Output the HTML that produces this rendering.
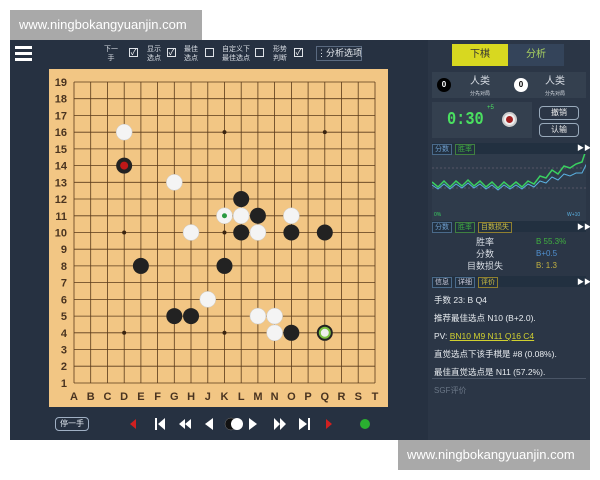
<!DOCTYPE html><html><head><meta charset="utf-8"><style>
*{margin:0;padding:0;box-sizing:border-box}
body{width:600px;height:480px;background:#fff;position:relative;overflow:hidden;font-family:"Liberation Sans","Noto Sans CJK SC",sans-serif}
.a{position:absolute;white-space:nowrap}
.wm{background:#a9a9a9;color:#fff;font-size:13px;line-height:30px;padding-left:9px}
.cj{font-family:"Liberation Sans","Noto Sans CJK SC",sans-serif}
.t{color:#d8dde4;font-size:7px;line-height:9px;text-align:center}
.cb{width:9px;height:9px;border:1px solid #dfe3e8;color:#fff;font-size:8px;line-height:7px;text-align:center}
.tab{border:1px solid #4a6a8a;font-size:7px;line-height:9px;padding:0 2px;color:#6fa0d0;background:#223040}
</style></head><body>
<div class="a wm" style="left:10px;top:10px;width:192px;height:30px">www.ningbokangyuanjin.com</div>
<div class="a" style="left:10px;top:40px;width:580px;height:400px;background:#263141"></div>
<div class="a" style="left:15px;top:46px;width:17px;height:3px;background:#fff;box-shadow:0 6px #fff,0 12px #fff"></div>
<div class="a t" style="left:104px;top:45px;width:14px">下一<br>手</div><div class="a cb" style="left:129px;top:48px">✓</div>
<div class="a t" style="left:145px;top:45px;width:18px">显示<br>选点</div><div class="a cb" style="left:167px;top:48px">✓</div>
<div class="a t" style="left:183px;top:45px;width:16px">最佳<br>选点</div><div class="a cb" style="left:205px;top:48px"></div>
<div class="a t" style="left:220px;top:45px;width:32px">自定义下<br>最佳选点</div><div class="a cb" style="left:255px;top:48px"></div>
<div class="a t" style="left:272px;top:45px;width:16px">形势<br>判断</div><div class="a cb" style="left:294px;top:48px">✓</div>
<div class="a" style="left:316px;top:46px;width:46px;height:15px;border:1px solid #5a6a80;color:#e8ecf0;font-size:9px;line-height:13px;text-align:center">⋮分析选项</div>
<svg class="a" style="left:0;top:0" width="430" height="440">
<rect x="49" y="69" width="339" height="338" fill="#f2c684"/>
<g stroke="#5a3a1a" stroke-width="0.8" id="g"></g>
<g id="s"></g>
<g font-size="11" font-weight="bold" fill="#4a3420" font-family="Liberation Sans" id="l"></g>
</svg>
<script>
var g=document.getElementById('g'),s=document.getElementById('s'),l=document.getElementById('l'),h='',x0=74,y0=82,d=16.72;
for(var i=0;i<19;i++){var p=(x0+i*d).toFixed(1),q=(y0+i*d).toFixed(1);h+='<line x1="'+p+'" y1="82" x2="'+p+'" y2="383"/><line x1="74" y1="'+q+'" x2="375" y2="'+q+'"/>';}
g.innerHTML=h;
var C='ABCDEFGHJKLMNOPQRST';function X(c){return x0+C.indexOf(c)*d}function Y(r){return y0+(19-r)*d}
var t='';['D4','K4','Q4','D10','K10','Q10','D16','K16','Q16'].forEach(function(v){t+='<circle cx="'+X(v[0])+'" cy="'+Y(+v.slice(1))+'" r="2" fill="#3a2410"/>'});
var B=['D14','L12','M11','L10','O10','Q10','E8','K8','G5','H5','O4','Q4'],W=['D16','G13','K11','L11','O11','H10','M10','J6','M5','N5','N4'];
B.forEach(function(v){t+='<circle cx="'+X(v[0])+'" cy="'+Y(+v.slice(1))+'" r="8" fill="#222"/>'});
W.forEach(function(v){t+='<circle cx="'+X(v[0])+'" cy="'+Y(+v.slice(1))+'" r="8" fill="#f4f4f4" stroke="#ccc" stroke-width=".5"/>'});
t+='<circle cx="'+X('D')+'" cy="'+Y(14)+'" r="4" fill="#c01818"/>';
t+='<circle cx="'+X('K')+'" cy="'+Y(11)+'" r="2.5" fill="#2a9a40"/>';
t+='<circle cx="'+X('Q')+'" cy="'+Y(4)+'" r="5" fill="#eee" stroke="#7ac040" stroke-width="2"/>';
s.innerHTML=t;var u='';
for(var i=0;i<19;i++){u+='<text x="'+(x0+i*d)+'" y="400" text-anchor="middle">'+C[i]+'</text>';u+='<text x="67" y="'+(y0+i*d+4)+'" text-anchor="end">'+(19-i)+'</text>';}
l.innerHTML=u;
</script>
<div class="a" style="left:55px;top:417px;width:34px;height:14px;border:1px solid #a0b0c4;border-radius:4px;color:#e0e6ee;font-size:8px;line-height:12px;text-align:center">停一手</div>
<svg class="a" style="left:125px;top:414px" width="250" height="20">
<path d="M5 10l6-5v10z" fill="#d02020"/>
<path d="M30 4h2v12h-2zM33 10l7-6v12z" fill="#fff"/>
<path d="M54 10l6-5v10zM60 10l6-5v10z" fill="#fff"/>
<path d="M80 10l8-6v12z" fill="#fff"/>
<circle cx="106" cy="10" r="6" fill="#111" stroke="#777" stroke-width=".5"/><circle cx="112" cy="10" r="6" fill="#fff"/>
<path d="M124 4l8 6-8 6z" fill="#fff"/>
<path d="M149 4l6 6-6 6zM155 4l6 6-6 6z" fill="#fff"/>
<path d="M174 4l8 6-8 6zM183 4h2v12h-2z" fill="#fff"/>
<path d="M201 5l6 5-6 5z" fill="#d02020"/>
<circle cx="240" cy="10" r="5" fill="#2ab030"/>
</svg>
<div class="a" style="left:428px;top:40px;width:162px;height:400px;background:#2b3646"></div>
<div class="a cj" style="left:452px;top:44px;width:56px;height:22px;background:#d8d820;color:#333;font-size:10px;line-height:22px;text-align:center">下棋</div>
<div class="a cj" style="left:508px;top:44px;width:56px;height:22px;background:#34445a;color:#a8d060;font-size:10px;line-height:22px;text-align:center">分析</div>
<div class="a" style="left:432px;top:72px;width:154px;height:26px;background:#34404f"></div>
<div class="a" style="left:437px;top:78px;width:14px;height:14px;border-radius:50%;background:#000;color:#fff;font-size:8px;line-height:14px;text-align:center;font-weight:bold">0</div>
<div class="a t" style="left:465px;top:76px;width:30px;font-size:10px;line-height:11px">人类<br><span style="font-size:5px">分先对局</span></div>
<div class="a" style="left:514px;top:78px;width:14px;height:14px;border-radius:50%;background:#fff;color:#000;font-size:8px;line-height:14px;text-align:center;font-weight:bold">0</div>
<div class="a t" style="left:540px;top:76px;width:30px;font-size:10px;line-height:11px">人类<br><span style="font-size:5px">分先对局</span></div>
<div class="a" style="left:432px;top:102px;width:100px;height:36px;background:#34404f"></div>
<div class="a" style="left:447px;top:110px;color:#4ae060;font-size:18px;font-family:'Liberation Mono',monospace;font-weight:bold;transform:scaleX(.85);transform-origin:left">0:30</div>
<div class="a" style="left:487px;top:105px;color:#4ae060;font-size:6px">+5</div>
<div class="a" style="left:502px;top:112px;width:15px;height:15px;border-radius:50%;background:#f0f0f0;border:2px solid #ccc"><div style="margin:2px;width:7px;height:7px;border-radius:50%;background:#a02020"></div></div>
<div class="a cj" style="left:539px;top:106px;width:40px;height:14px;border:1px solid #9ab;border-radius:4px;color:#eee;font-size:8px;line-height:12px;text-align:center">撤销</div>
<div class="a cj" style="left:539px;top:123px;width:40px;height:14px;border:1px solid #9ab;border-radius:4px;color:#eee;font-size:8px;line-height:12px;text-align:center">认输</div>
<div class="a" style="left:432px;top:143px;width:154px;height:78px;background:#2f3b4b"></div>
<div class="a" style="left:432px;top:143px;width:154px;height:11px;background:#223040"></div>
<div class="a tab" style="left:432px;top:144px">分数</div><div class="a tab" style="left:455px;top:144px;color:#40b040;border-color:#408040">胜率</div>
<div class="a" style="left:577px;top:143px;color:#fff;font-size:7px">▶▶</div>
<svg class="a" style="left:432px;top:154px" width="154" height="66">
<line x1="0" y1="14" x2="154" y2="14" stroke="#556" stroke-dasharray="2 2"/><line x1="0" y1="34" x2="154" y2="34" stroke="#556" stroke-dasharray="2 2"/>
<path d="M0 28l6 5 6-6 6 6 6-6 6 5 6-6 6 6 6-5 6 6 6-5 6 6 6-6 6 5 6-5 6 5 6-6 6 3 6-8 6 2 6-8 6 4 6-8 6 2 6-4 6-2 6-18 6 22 6 2 6 4" fill="none" stroke="#3ad060" stroke-width="1.5"/>
<path d="M0 31l6 4 6-5 6 5 6-5 6 4 6-5 6 5 6-4 6 5 6-4 6 5 6-5 6 4 6-4 6 4 6-5 6 3 6-6 6 2 6-6 6 3 6-6 6 2 6-3 6 0 6-12 6 16 6 0 6 2" fill="none" stroke="#5ab0e0" stroke-width="1"/>
<text x="2" y="62" fill="#3ad060" font-size="5">0%</text><text x="135" y="62" fill="#5ab0e0" font-size="5">W+10</text>
</svg>
<div class="a" style="left:432px;top:221px;width:154px;height:11px;background:#223040"></div>
<div class="a tab" style="left:432px;top:222px">分数</div><div class="a tab" style="left:455px;top:222px;color:#40b040;border-color:#408040">胜率</div><div class="a tab" style="left:478px;top:222px;color:#d0c040;border-color:#908030">目数损失</div>
<div class="a" style="left:577px;top:222px;color:#fff;font-size:7px">▶▶</div>
<div class="a t" style="left:455px;top:236px;width:60px;font-size:9px;line-height:12px">胜率<br>分数<br>目数损失</div>
<div class="a" style="left:536px;top:236px;font-size:8px;line-height:12px"><span style="color:#40b040">B 55.3%</span><br><span style="color:#5090d0">B+0.5</span><br><span style="color:#c0b040">B: 1.3</span></div>
<div class="a" style="left:432px;top:276px;width:154px;height:11px;background:#223040"></div>
<div class="a tab" style="left:432px;top:277px;color:#ccd">信息</div><div class="a tab" style="left:455px;top:277px;color:#ccd">详细</div><div class="a tab" style="left:478px;top:277px;color:#d0c040;border-color:#908030">评价</div>
<div class="a" style="left:577px;top:277px;color:#fff;font-size:7px">▶▶</div>
<div class="a cj" style="left:434px;top:291px;color:#e8ecf0;font-size:8.5px;line-height:18px">手数 23: B Q4<br>推荐最佳选点 N10 (B+2.0).<br>PV: <span style="color:#d0d030;text-decoration:underline">BN10 M9 N11 Q16 C4</span><br>直觉选点下该手棋是 #8 (0.08%).<br>最佳直觉选点是 N11 (57.2%).</div>
<div class="a" style="left:432px;top:378px;width:154px;height:1px;background:#4a5566"></div>
<div class="a" style="left:434px;top:385px;color:#6a7686;font-size:8px">SGF评价</div>
<div class="a wm" style="left:398px;top:440px;width:192px;height:30px">www.ningbokangyuanjin.com</div>
</body></html>
